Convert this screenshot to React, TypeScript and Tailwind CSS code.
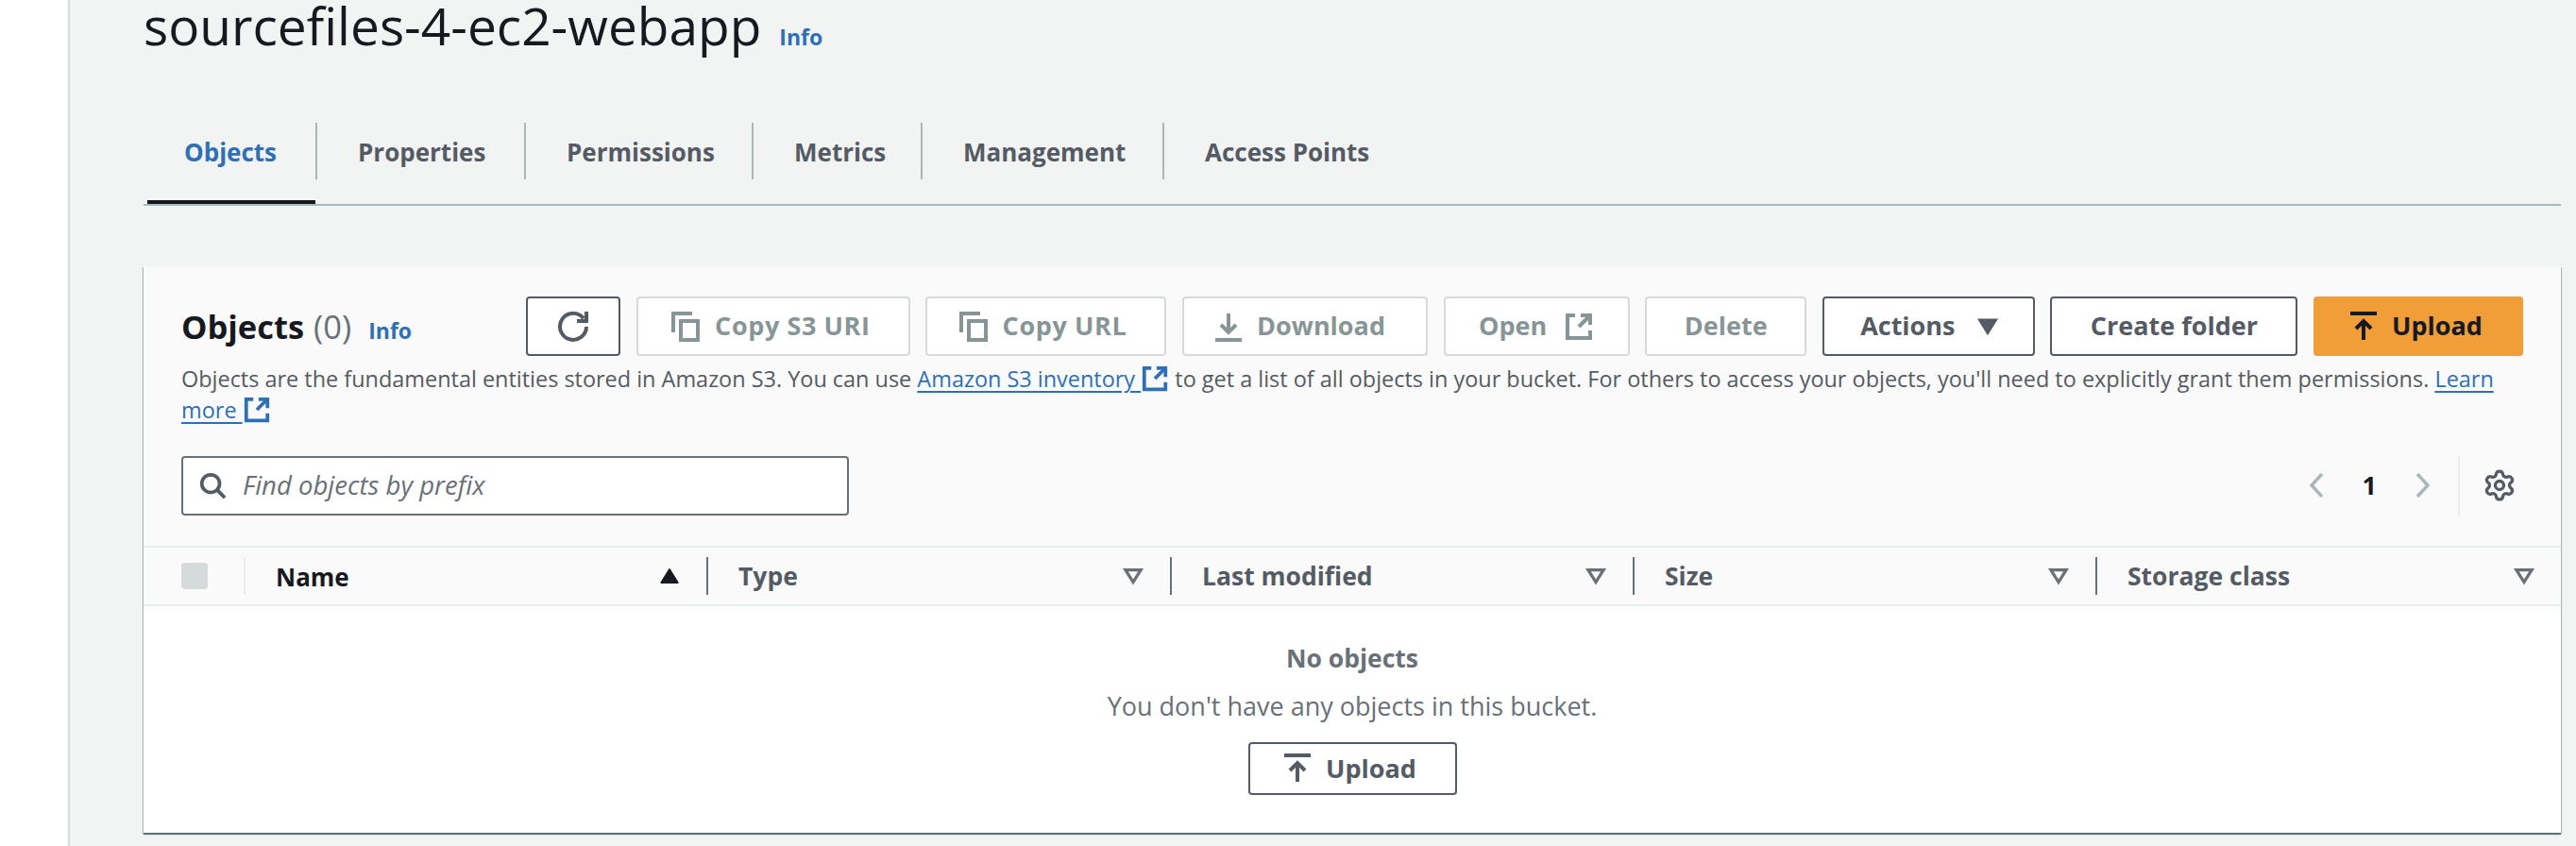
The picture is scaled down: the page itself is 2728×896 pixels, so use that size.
import React from "react";
import { Settings } from "lucide-react";

type IconProps = { className?: string };

const Svg: React.FC<React.PropsWithChildren<IconProps>> = ({ className, children }) => (
  <svg
    viewBox="0 0 16 16"
    fill="none"
    stroke="currentColor"
    strokeWidth="2"
    className={className}
  >
    {children}
  </svg>
);

const RefreshIcon = ({ className }: IconProps) => (
  <Svg className={className}>
    <path d="M10 5h5V0" />
    <path d="M15 8a7 7 0 1 1-1.5-4.4" />
  </Svg>
);

const CopyIcon = ({ className }: IconProps) => (
  <Svg className={className}>
    <path d="M1 11V1h10" />
    <path d="M5 5h9v10H5z" />
  </Svg>
);

const DownloadIcon = ({ className }: IconProps) => (
  <Svg className={className}>
    <path d="M1 15h14" />
    <path d="M8 11V1" />
    <path d="m4 7 4 4 4-4" />
  </Svg>
);

const ExternalIcon = ({ className }: IconProps) => (
  <Svg className={className}>
    <path d="M14 7V2H9" />
    <path d="M14 2 8 8" />
    <path d="M6 2H2v12h12v-4" />
  </Svg>
);

const UploadIcon = ({ className }: IconProps) => (
  <Svg className={className}>
    <path d="M1 1h14" />
    <path d="M8 15V5" />
    <path d="m4 9 4-4 4 4" />
  </Svg>
);

const SearchIcon = ({ className }: IconProps) => (
  <Svg className={className}>
    <circle cx="7" cy="7" r="5" />
    <path d="m15 15-4.5-4.5" />
  </Svg>
);

const ChevronLeft = ({ className }: IconProps) => (
  <svg viewBox="0 0 18 26" fill="none" stroke="currentColor" strokeWidth="3.5" className={className}>
    <path d="M15 1 4 13l11 12" />
  </svg>
);

const ChevronRight = ({ className }: IconProps) => (
  <svg viewBox="0 0 18 26" fill="none" stroke="currentColor" strokeWidth="3.5" className={className}>
    <path d="m3 1 11 12L3 25" />
  </svg>
);

const CaretDown = ({ className }: IconProps) => (
  <svg viewBox="0 0 16 16" fill="currentColor" stroke="currentColor" strokeWidth="1" className={className}>
    <path d="M3 4h10l-5 8z" />
  </svg>
);

const CaretUp = ({ className }: IconProps) => (
  <svg viewBox="0 0 16 16" fill="currentColor" stroke="currentColor" strokeWidth="1" strokeLinejoin="round" className={className}>
    <path d="M3 12h10L8 4z" />
  </svg>
);

const CaretOutline = ({ className }: IconProps) => (
  <svg viewBox="0 0 16 16" fill="none" stroke="currentColor" strokeWidth="2" className={className}>
    <path d="M3 4h10l-5 8z" />
  </svg>
);

const disabledBtn =
  "h-[63px] flex items-center justify-center gap-[14px] rounded-[4px] border-2 border-[#d5dbdb] bg-white text-[#879596] text-[27px] font-bold";
const normalBtn =
  "h-[63px] flex items-center justify-center rounded-[4px] border-2 border-[#545b64] bg-white text-[#545b64] text-[27px] font-bold";

const Tab: React.FC<{ label: string; className: string; active?: boolean }> = ({ label, className, active }) => (
  <div className={`h-[60px] flex items-center pt-[2px] text-[26px] font-bold ${className} ${active ? "text-[#2e6fb7]" : "text-[#545b64]"}`}>
    {label}
  </div>
);

const ColumnHead: React.FC<{ label: string }> = ({ label }) => (
  <div className="h-[40px] flex items-center justify-between pl-[32px] pr-[26px] border-r-2 border-[#687078] last:border-r-0 last:pr-[26px]">
    <span className="mt-[2px] text-[26.5px] font-bold text-[#545b64]">{label}</span>
    <CaretOutline className="w-[26px] h-[26px] text-[#687078]" />
  </div>
);

const App: React.FC = () => {
  return (
    <div className="w-[2728px] h-[896px] overflow-hidden flex bg-white font-['Open_Sans',sans-serif]">
      {/* Side gutter */}
      <div className="w-[74px] shrink-0 bg-white border-r-2 border-[#d5dbdb]" />

      <div className="flex-1 bg-[#f2f3f3] pl-[78px] pr-[16px]">
        {/* Title */}
        <div className="h-[60px] flex items-baseline">
          <h1 className="text-[55px] leading-[54px] font-medium text-[#16191f]">sourcefiles-4-ec2-webapp</h1>
          <a className="ml-[19px] text-[23px] font-bold text-[#2e6fb7]">Info</a>
        </div>

        {/* Tabs */}
        <div className="mt-[58px] h-[100px] border-b-2 border-[#aab7b8] flex items-start pt-[12px]">
          <div className="relative">
            <Tab label="Objects" active className="w-[184px] pl-[43px] border-r-2 border-[#aab7b8]" />
            <div className="absolute left-[4px] right-[2px] top-[82px] h-[4px] bg-[#16191f]" />
          </div>
          <Tab label="Properties" className="w-[221px] pl-[43px] border-r-2 border-[#aab7b8]" />
          <Tab label="Permissions" className="w-[241px] pl-[43px] border-r-2 border-[#aab7b8]" />
          <Tab label="Metrics" className="w-[179px] pl-[43px] border-r-2 border-[#aab7b8]" />
          <Tab label="Management" className="w-[256px] pl-[43px] border-r-2 border-[#aab7b8]" />
          <Tab label="Access Points" className="pl-[43px]" />
        </div>

        {/* Objects card */}
        <div className="mt-[64px] h-[600px] flex flex-col bg-[#fafafa] shadow-[0_2px_1px_0_rgba(0,28,36,0.5),1px_1px_1px_0_rgba(0,28,36,0.2),-1px_1px_1px_0_rgba(0,28,36,0.2)]">
          <div className="h-[296px] pt-[32px] pl-[40px] pr-[40px]">
            <div className="flex items-center justify-between">
              <div className="flex items-baseline">
                <span className="text-[34.5px] font-bold text-[#16191f]">Objects</span>
                <span className="ml-[10px] text-[34.5px] font-normal text-[#687078]">(0)</span>
                <a className="ml-[18px] text-[23px] font-bold text-[#2e6fb7]">Info</a>
              </div>
              <div className="flex items-center gap-[16.6px]">
                <button className={`${normalBtn} w-[100px]`}>
                  <RefreshIcon className="w-[32px] h-[32px]" />
                </button>
                <button className={`${disabledBtn} w-[290px] pr-[5px] tracking-[0.6px]`}>
                  <CopyIcon className="w-[32px] h-[32px]" />
                  Copy S3 URI
                </button>
                <button className={`${disabledBtn} w-[255px] pr-[7px] tracking-[0.6px]`}>
                  <CopyIcon className="w-[32px] h-[32px]" />
                  Copy URL
                </button>
                <button className={`${disabledBtn} w-[260px] pr-[12px]`}>
                  <DownloadIcon className="w-[32px] h-[32px]" />
                  Download
                </button>
                <button className={`${disabledBtn} w-[197px] !gap-[18px]`}>
                  Open
                  <ExternalIcon className="w-[32px] h-[32px]" />
                </button>
                <button className={`${disabledBtn} w-[171px]`}>Delete</button>
                <button className={`${normalBtn} w-[225px] gap-[20px] pl-[6px]`}>
                  Actions
                  <CaretDown className="w-[30px] h-[30px]" />
                </button>
                <button className={`${normalBtn} w-[262px]`}>Create folder</button>
                <button className="h-[63px] w-[222px] flex items-center justify-center gap-[14px] pr-[6px] rounded-[4px] bg-[#f29e38] text-[#16191f] text-[27px] font-bold">
                  <UploadIcon className="w-[32px] h-[32px]" />
                  Upload
                </button>
              </div>
            </div>

            <p className="mt-[8px] text-[23.45px] leading-[33px] text-[#545b64]">
              Objects are the fundamental entities stored in Amazon S3. You can use{" "}
              <a className="text-[#2e6fb7] underline underline-offset-4">Amazon S3 inventory </a>
              <ExternalIcon className="inline w-[30px] h-[30px] text-[#2e6fb7] align-[-6px]" />{" "}
              to get a list of all objects in your bucket. For others to access your objects, you&apos;ll need to explicitly grant them permissions.{" "}
              <a className="text-[#2e6fb7] underline underline-offset-4">Learn</a>{" "}
              <a className="text-[#2e6fb7] underline underline-offset-4">more </a>
              <ExternalIcon className="inline w-[30px] h-[30px] text-[#2e6fb7] align-[-6px]" />
            </p>

            <div className="mt-[31px] flex items-center justify-between">
              <div className="w-[707px] h-[63px] flex items-center gap-[17px] pl-[16px] rounded-[4px] border-2 border-[#687078] bg-white">
                <SearchIcon className="w-[30px] h-[30px] text-[#545b64]" />
                <span className="text-[27.5px] italic text-[#687078]">Find objects by prefix</span>
              </div>
              <div className="flex items-center text-[#aab7b8]">
                <ChevronLeft className="w-[18px] h-[26px]" />
                <span className="mx-[40px] text-[27px] font-bold text-[#16191f]">1</span>
                <ChevronRight className="w-[18px] h-[26px]" />
                <div className="ml-[28px] h-[64px] border-l-2 border-[#eaeded]" />
                <Settings className="ml-[24px] mr-[7px] w-[36px] h-[36px] text-[#545b64]" strokeWidth={2.2} />
              </div>
            </div>
          </div>

          {/* Table header */}
          <div className="h-[64px] border-y-2 border-[#eaeded] flex items-center">
            <div className="w-[108px] shrink-0 h-[40px] flex items-center pl-[40px] border-r-2 border-[#eaeded]">
              <div className="w-[28px] h-[28px] rounded-[4px] bg-[#d5dbdb]" />
            </div>
            <div className="w-[490px] shrink-0 h-[40px] flex items-center justify-between pl-[32px] pr-[25px] border-r-2 border-[#687078]">
              <span className="mt-[2px] text-[26px] font-bold text-[#16191f]">Name</span>
              <CaretUp className="w-[28px] h-[28px] text-[#16191f]" />
            </div>
            <div className="flex-1 grid grid-cols-[491px_490px_490px_1fr]">
              <ColumnHead label="Type" />
              <ColumnHead label="Last modified" />
              <ColumnHead label="Size" />
              <ColumnHead label="Storage class" />
            </div>
          </div>

          {/* Empty state */}
          <div className="flex-1 bg-white flex flex-col items-center pt-[36px]">
            <p className="text-[26.5px] leading-[38px] font-bold text-[#687078]">No objects</p>
            <p className="mt-[13px] text-[27px] leading-[38px] text-[#687078]">You don&apos;t have any objects in this bucket.</p>
            <button className="mt-[19px] w-[221px] h-[56px] flex items-center justify-center gap-[14px] pr-[6px] rounded-[4px] border-2 border-[#545b64] bg-white text-[#545b64] text-[27px] font-bold">
              <UploadIcon className="w-[32px] h-[32px]" />
              Upload
            </button>
          </div>
        </div>
      </div>
    </div>
  );
};

export default App;
